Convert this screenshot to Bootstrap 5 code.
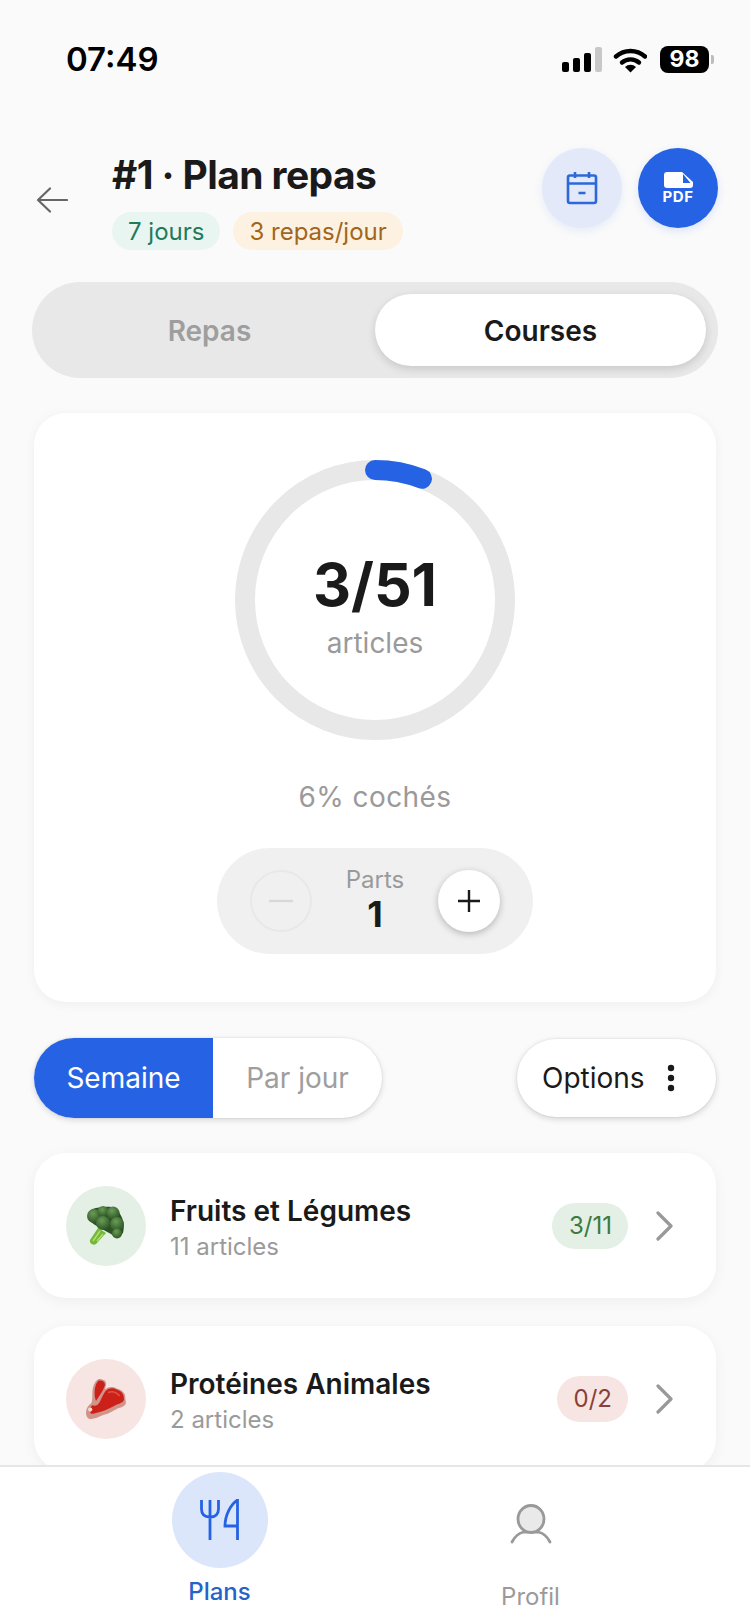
<!DOCTYPE html>
<html lang="fr">
<head>
  <meta charset="UTF-8" />
  <meta name="viewport" content="width=device-width, initial-scale=1.0"/>
  <title>Plan repas - Courses</title>
  <link href="https://cdn.jsdelivr.net/npm/bootstrap@5.3.2/dist/css/bootstrap.min.css" rel="stylesheet"/>
  <style>
    body { background: #fafafa; font-family: Inter, "Liberation Sans", sans-serif; color: #1a1a1a; margin: 0; }
    .phone { width: 750px; height: 1624px; background: #fafafa; overflow: hidden; }
    .scroll-area { flex: 1 1 0; min-height: 0; overflow: hidden; }

    /* status bar */
    .status-strip { height: 148px; padding: 19px 36px 0 66px; }
    .clock { font-size: 33px; font-weight: 600; line-height: 80px; color: #000; }
    .status-icons { height: 80px; padding-top: 1px; }
    .batt { width: 49px; height: 27px; background: #000; color: #fff; border-radius: 8px; font-size: 23px; font-weight: 700; line-height: 27px; text-align: center; margin-left: 13px; }
    .batt-tip { width: 3px; height: 9px; background: #bdbdbd; border-radius: 0 2px 2px 0; margin-left: 2px; }

    /* header */
    .head-row { height: 134px; padding: 0 32px 0 36px; }
    .back-col { width: 76px; padding-top: 39px; flex: none; }
    .plan-title { font-size: 39px; font-weight: 700; line-height: 54px; letter-spacing: -.6px; margin: 0; }
    .chip-row { margin-top: 10px; gap: 13px; }
    .chip { height: 38px; line-height: 39px; border-radius: 19px; padding: 0 16px; font-size: 24px; font-weight: 400; }
    .chip-green { background: #e9f5f0; color: #217a5b; }
    .chip-orange { background: #fdf2e2; color: #a2651c; }
    .round-action { width: 80px; height: 80px; border: 0; padding: 0; flex: none; }
    .act-cal { background: #e3e9f8; box-shadow: 0 3px 8px rgba(37,99,235,.1); }
    .act-cal:hover, .act-pdf:hover { background: inherit; }
    .act-pdf { background: #2563e4; color: #fff; box-shadow: 0 3px 8px rgba(37,99,235,.15); }
    .pdf-label { font-size: 15px; font-weight: 700; line-height: 16px; letter-spacing: .6px; color: #fff; margin-top: 1px; }

    /* repas / courses */
    .seg-main { height: 96px; margin: 0 32px 35px; background: #e8e8e8; padding: 12px; flex: none; }
    .seg-tab { flex: 1 1 0; font-size: 28px; font-weight: 600; line-height: 74px; height: 72px; text-align: center; color: #9e9e9e; }
    .seg-on { background: #fff; color: #1a1a1a; box-shadow: 0 3px 8px rgba(0,0,0,.14); }

    /* progress card */
    .progress-card { height: 589px; margin: 0 34px; border: 0; border-radius: 32px; background: #fff; box-shadow: 0 2px 12px rgba(0,0,0,.05); padding-top: 47px; flex: none; }
    .ring-box { display: grid; width: 280px; height: 280px; }
    .ring-box > * { grid-area: 1 / 1; }
    .ring-copy { padding-top: 10px; }
    .ring-count { font-size: 59px; font-weight: 700; line-height: 72px; margin-bottom: 4px; }
    .ring-sub { font-size: 28px; line-height: 36px; color: #9a9a9a; }
    .done-line { font-size: 28px; line-height: 36px; color: #9a9a9a; letter-spacing: .4px; margin-top: 39px; }
    .parts-pill { width: 316px; height: 106px; background: #f0f0f0; border-radius: 53px; margin-top: 33px; padding: 0 33px; }
    .parts-btn { width: 62px; height: 62px; padding: 0; }
    .parts-off, .parts-off:disabled { background: transparent; border: 2px solid #e8e8e8; opacity: 1; }
    .parts-plus { background: #fff; border: 0; box-shadow: 0 2px 7px rgba(0,0,0,.25); }
    .parts-plus:hover { background: #fff; }
    .parts-copy { padding-bottom: 4px; }
    .parts-label { font-size: 24px; line-height: 30px; color: #9a9a9a; }
    .parts-num { font-size: 36px; font-weight: 700; line-height: 38px; }

    /* week / options */
    .tools-row { margin: 36px 34px 35px; height: 80px; flex: none; }
    .scope-toggle { width: 348px; height: 80px; background: #fff; overflow: hidden; box-shadow: 0 0 0 1px rgba(0,0,0,.03), 0 2px 6px rgba(0,0,0,.14); }
    .scope-a { width: 179px; background: #2563e4; color: #fff; font-size: 28px; line-height: 80px; text-align: center; }
    .scope-b { flex: 1; color: #9e9e9e; font-size: 28px; line-height: 80px; text-align: center; }
    .options-btn { width: 199px; height: 78px; background: #fff; border: 0; box-shadow: 0 0 0 1px rgba(0,0,0,.03), 0 2px 6px rgba(0,0,0,.16); font-size: 28px; color: #1a1a1a; padding: 0 0 0 25px; }
    .options-btn:hover { background: #fff; color: #1a1a1a; }
    .dots-icon { margin-left: 22px; }

    /* categories */
    .cat-card { height: 145px; margin: 0 34px 28px; border: 0; border-radius: 32px; background: #fff; box-shadow: 0 3px 14px rgba(0,0,0,.05); padding: 0 42px 0 32px; flex: none; }
    .cat-dot { width: 80px; height: 80px; flex: none; }
    .dot-green { background: #e4f0e5; }
    .dot-red { background: #f6e5e2; }
    .cat-name { font-size: 28px; font-weight: 600; line-height: 36px; margin: 0; }
    .cat-sub { font-size: 24px; line-height: 32px; color: #9a9a9a; margin-top: 2px; }
    .cat-text { margin-left: 24px; padding-top: 4px; }
    .cat-pill { height: 46px; line-height: 46px; border-radius: 23px; padding: 0 16px 0 17px; font-size: 24px; margin-right: 28px; }
    .pill-green { background: #e4f0e5; color: #3c7a40; }
    .pill-red { background: #f6e5e2; color: #8a4038; }

    /* bottom tabs */
    .tab-strip { height: 159px; flex: none; background: #fff; border-top: 2px solid #e6e6e6; padding: 0 64px; }
    .tab-col { flex: 1 1 0; }
    .tab-bubble { width: 96px; height: 96px; background: #dbe6fb; margin-top: 5px; }
    .tab-label { font-size: 24px; line-height: 32px; }
    .tab-on { color: #2563c8; font-weight: 500; margin-top: 8px; }
    .tab-off { color: #9a9a9a; margin-top: 37px; }
    .profil-icon { margin-top: 37px; }
  </style>
</head>

<body>
  <div class="phone d-flex flex-column">

    <div class="scroll-area d-flex flex-column">
      <div class="status-strip d-flex flex-shrink-0 justify-content-between align-items-start">
        <div class="clock">07:49</div>
        <div class="status-icons d-flex align-items-center">
          <svg width="85" height="26" viewBox="0 0 85 26">
            <rect x="0" y="15" width="7" height="10" rx="2" fill="#000"/>
            <rect x="11" y="11" width="7" height="14" rx="2" fill="#000"/>
            <rect x="22" y="6" width="7" height="19" rx="2" fill="#000"/>
            <rect x="33" y="0" width="7" height="25" rx="2" fill="#c8c8c8"/>
            <path d="M54 9.500a22 22 0 0 1 29 0" fill="none" stroke="#000" stroke-width="4.400" stroke-linecap="round"/>
            <path d="M60 15.500a13 13 0 0 1 17 0" fill="none" stroke="#000" stroke-width="4.400" stroke-linecap="round"/>
            <path d="M68.500 25.500l-5.500-5.500a8 8 0 0 1 11 0z" fill="#000"/>
          </svg>
          <div class="batt">98</div>
          <div class="batt-tip"></div>
        </div>
      </div>

      <div class="head-row d-flex flex-shrink-0 align-items-start">
        <div class="back-col">
          <svg width="32" height="26" viewBox="0 0 32 26" class="d-block">
            <path d="M31 13H2M14 1.500 2 13l12 11.500" fill="none" stroke="#666" stroke-width="2.200" stroke-linecap="round" stroke-linejoin="round"/>
          </svg>
        </div>
        <div class="flex-grow-1">
          <h1 class="plan-title">#1 · Plan repas</h1>
          <div class="chip-row d-flex">
            <span class="chip chip-green">7 jours</span>
            <span class="chip chip-orange">3 repas/jour</span>
          </div>
        </div>
        <div class="d-flex gap-3">
          <button class="btn round-action act-cal rounded-circle d-flex align-items-center justify-content-center">
            <svg width="32" height="34" viewBox="0 0 32 34">
              <rect x="2" y="4.500" width="28" height="27.500" rx="2" fill="none" stroke="#2d68d8" stroke-width="2.600"/>
              <path d="M2 12.500h28M9 1v6M23 1v6M12.500 22h7" fill="none" stroke="#2d68d8" stroke-width="2.600"/>
            </svg>
          </button>
          <button class="btn round-action act-pdf rounded-circle d-flex flex-column align-items-center justify-content-center">
            <svg width="29" height="16" viewBox="0 0 29 16" class="d-block">
              <path d="M3 0h15l11 10v3a3 3 0 0 1-3 3H3a3 3 0 0 1-3-3V3a3 3 0 0 1 3-3z" fill="#fff"/>
              <path d="M19 2l7.500 9H19z" fill="#2563e4"/>
            </svg>
            <span class="pdf-label">PDF</span>
          </button>
        </div>
      </div>

      <div class="seg-main d-flex rounded-pill">
        <div class="seg-tab rounded-pill">Repas</div>
        <div class="seg-tab seg-on rounded-pill">Courses</div>
      </div>

      <div class="card progress-card align-items-center">
        <div class="ring-box">
          <svg width="280" height="280" viewBox="0 0 280 280">
            <circle cx="140" cy="140" r="130" fill="none" stroke="#e8e8e8" stroke-width="20"/>
            <circle cx="140" cy="140" r="130" fill="none" stroke="#2563e4" stroke-width="20" stroke-linecap="round" stroke-dasharray="48 769" transform="rotate(-90 140 140)"/>
          </svg>
          <div class="ring-copy d-flex flex-column align-items-center justify-content-center">
            <div class="ring-count">3/51</div>
            <div class="ring-sub">articles</div>
          </div>
        </div>
        <div class="done-line">6% cochés</div>
        <div class="parts-pill d-flex align-items-center justify-content-between">
          <button class="btn parts-btn parts-off rounded-circle d-flex align-items-center justify-content-center" disabled>
            <svg width="24" height="4" viewBox="0 0 24 4"><path d="M0 2h24" stroke="#d8d8d8" stroke-width="2.400"/></svg>
          </button>
          <div class="parts-copy text-center">
            <div class="parts-label">Parts</div>
            <div class="parts-num">1</div>
          </div>
          <button class="btn parts-btn parts-plus rounded-circle d-flex align-items-center justify-content-center">
            <svg width="22" height="22" viewBox="0 0 22 22"><path d="M0 11h22M11 0v22" stroke="#1a1a1a" stroke-width="2.400"/></svg>
          </button>
        </div>
      </div>

      <div class="tools-row d-flex justify-content-between align-items-center">
        <div class="scope-toggle d-flex rounded-pill">
          <div class="scope-a">Semaine</div>
          <div class="scope-b">Par jour</div>
        </div>
        <button class="btn options-btn rounded-pill d-flex align-items-center">
          Options
          <svg width="8" height="28" viewBox="0 0 8 28" class="dots-icon">
            <circle cx="4" cy="4" r="3.200" fill="#1a1a1a"/><circle cx="4" cy="14" r="3.200" fill="#1a1a1a"/><circle cx="4" cy="24" r="3.200" fill="#1a1a1a"/>
          </svg>
        </button>
      </div>

      <div class="card cat-card flex-row align-items-center">
        <div class="cat-dot dot-green rounded-circle d-flex align-items-center justify-content-center">
          <svg width="40" height="40" viewBox="0 0 40 40">
            <defs>
              <radialGradient id="floret" cx="42%" cy="32%" r="72%">
                <stop offset="0" stop-color="#6a9c58"/><stop offset="1" stop-color="#2a5222"/>
              </radialGradient>
            </defs>
            <path d="M4 34l8-12 8 5-10 11c-3 2-7-1-6-4z" fill="#74b83a"/>
            <path d="M7 35l7-10M11 35l6-7" stroke="#b0de6c" stroke-width="1.500"/>
            <path d="M5 4C9 1 14 2 19 1c6-1 13 1 15 7 3 4 5 12 3 19-3 4-9 4-12 1-5-3-10-5-14-8C6 18 0 12 5 4z" fill="#2a5222"/>
            <circle cx="8" cy="10" r="7" fill="url(#floret)"/>
            <circle cx="17" cy="5.500" r="5.500" fill="url(#floret)"/>
            <circle cx="27" cy="7" r="6.500" fill="url(#floret)"/>
            <circle cx="17" cy="17" r="7" fill="url(#floret)"/>
            <circle cx="31" cy="18" r="7" fill="url(#floret)"/>
            <circle cx="31" cy="27.500" r="5" fill="url(#floret)"/>
          </svg>
        </div>
        <div class="cat-text flex-grow-1">
          <h2 class="cat-name">Fruits et Légumes</h2>
          <div class="cat-sub">11 articles</div>
        </div>
        <span class="cat-pill pill-green">3/11</span>
        <svg width="18" height="30" viewBox="0 0 18 30"><path d="M2 2l13 13L2 28" fill="none" stroke="#999" stroke-width="3.200" stroke-linecap="round" stroke-linejoin="round"/></svg>
      </div>

      <div class="card cat-card flex-row align-items-center">
        <div class="cat-dot dot-red rounded-circle d-flex align-items-center justify-content-center">
          <svg width="40" height="40" viewBox="0 0 38 38">
            <path d="M12 0C17 0 20 2 19 6L18 10C21 7 26 7 29 9 33 10 36 12 37 15L38 23C37 26 33 27 30 28 26 30 22 33 17 34 12 36 8 38 5 38 2 38 0 36 0 32 0 28 2 25 5 23 6 21 6 18 6 14 6 8 8 2 12 0Z" fill="#cf958b"/>
            <path d="M12 1.500C16 1 18 3 18 6L16 11 9.500 21C7 15 8 5 12 1.500Z" fill="#cc2118"/>
            <path d="M18 12C21 8 26 8 29 10 33 11 36 14 36 18 37 22 32 23 28 25 24 27 19 30 14 31 10 32 7 33 5 33 3 31 3 28 6 25 9 26 11 25 13 22 15 18 16 15 18 12Z" fill="#cc2118"/>
            <path d="M21 13C25 11 29 13 32 16" fill="none" stroke="#e2503f" stroke-width="1.500"/>
            <circle cx="4" cy="29" r="2" fill="#f3d9d2"/>
          </svg>
        </div>
        <div class="cat-text flex-grow-1">
          <h2 class="cat-name">Protéines Animales</h2>
          <div class="cat-sub">2 articles</div>
        </div>
        <span class="cat-pill pill-red">0/2</span>
        <svg width="18" height="30" viewBox="0 0 18 30"><path d="M2 2l13 13L2 28" fill="none" stroke="#999" stroke-width="3.200" stroke-linecap="round" stroke-linejoin="round"/></svg>
      </div>
    </div>

    <div class="tab-strip d-flex">
      <div class="tab-col d-flex flex-column align-items-center">
        <div class="tab-bubble rounded-circle d-flex align-items-center justify-content-center">
          <svg width="40" height="42" viewBox="0 0 40 42">
            <path d="M1.500 1v9c0 5 3 8 8.500 8s8.500-3 8.500-8V1M10 1v40M37.500 41V1C31 5 25 16 25 27h12.500" fill="none" stroke="#2563e4" stroke-width="2.800"/>
          </svg>
        </div>
        <div class="tab-label tab-on">Plans</div>
      </div>
      <div class="tab-col d-flex flex-column align-items-center">
        <svg width="42" height="40" viewBox="0 0 42 40" class="profil-icon">
          <path d="M2 38c3-6 7-9 12-10h14c5 1 9 4 12 10" fill="none" stroke="#999" stroke-width="2.800" stroke-linecap="round"/>
          <ellipse cx="21" cy="15" rx="13" ry="13.500" fill="#e9e9e9" stroke="#999" stroke-width="2.800"/>
        </svg>
        <div class="tab-label tab-off">Profil</div>
      </div>
    </div>
  </div>

  <script src="https://cdn.jsdelivr.net/npm/bootstrap@5.3.2/dist/js/bootstrap.bundle.min.js"></script>
</body>
</html>
